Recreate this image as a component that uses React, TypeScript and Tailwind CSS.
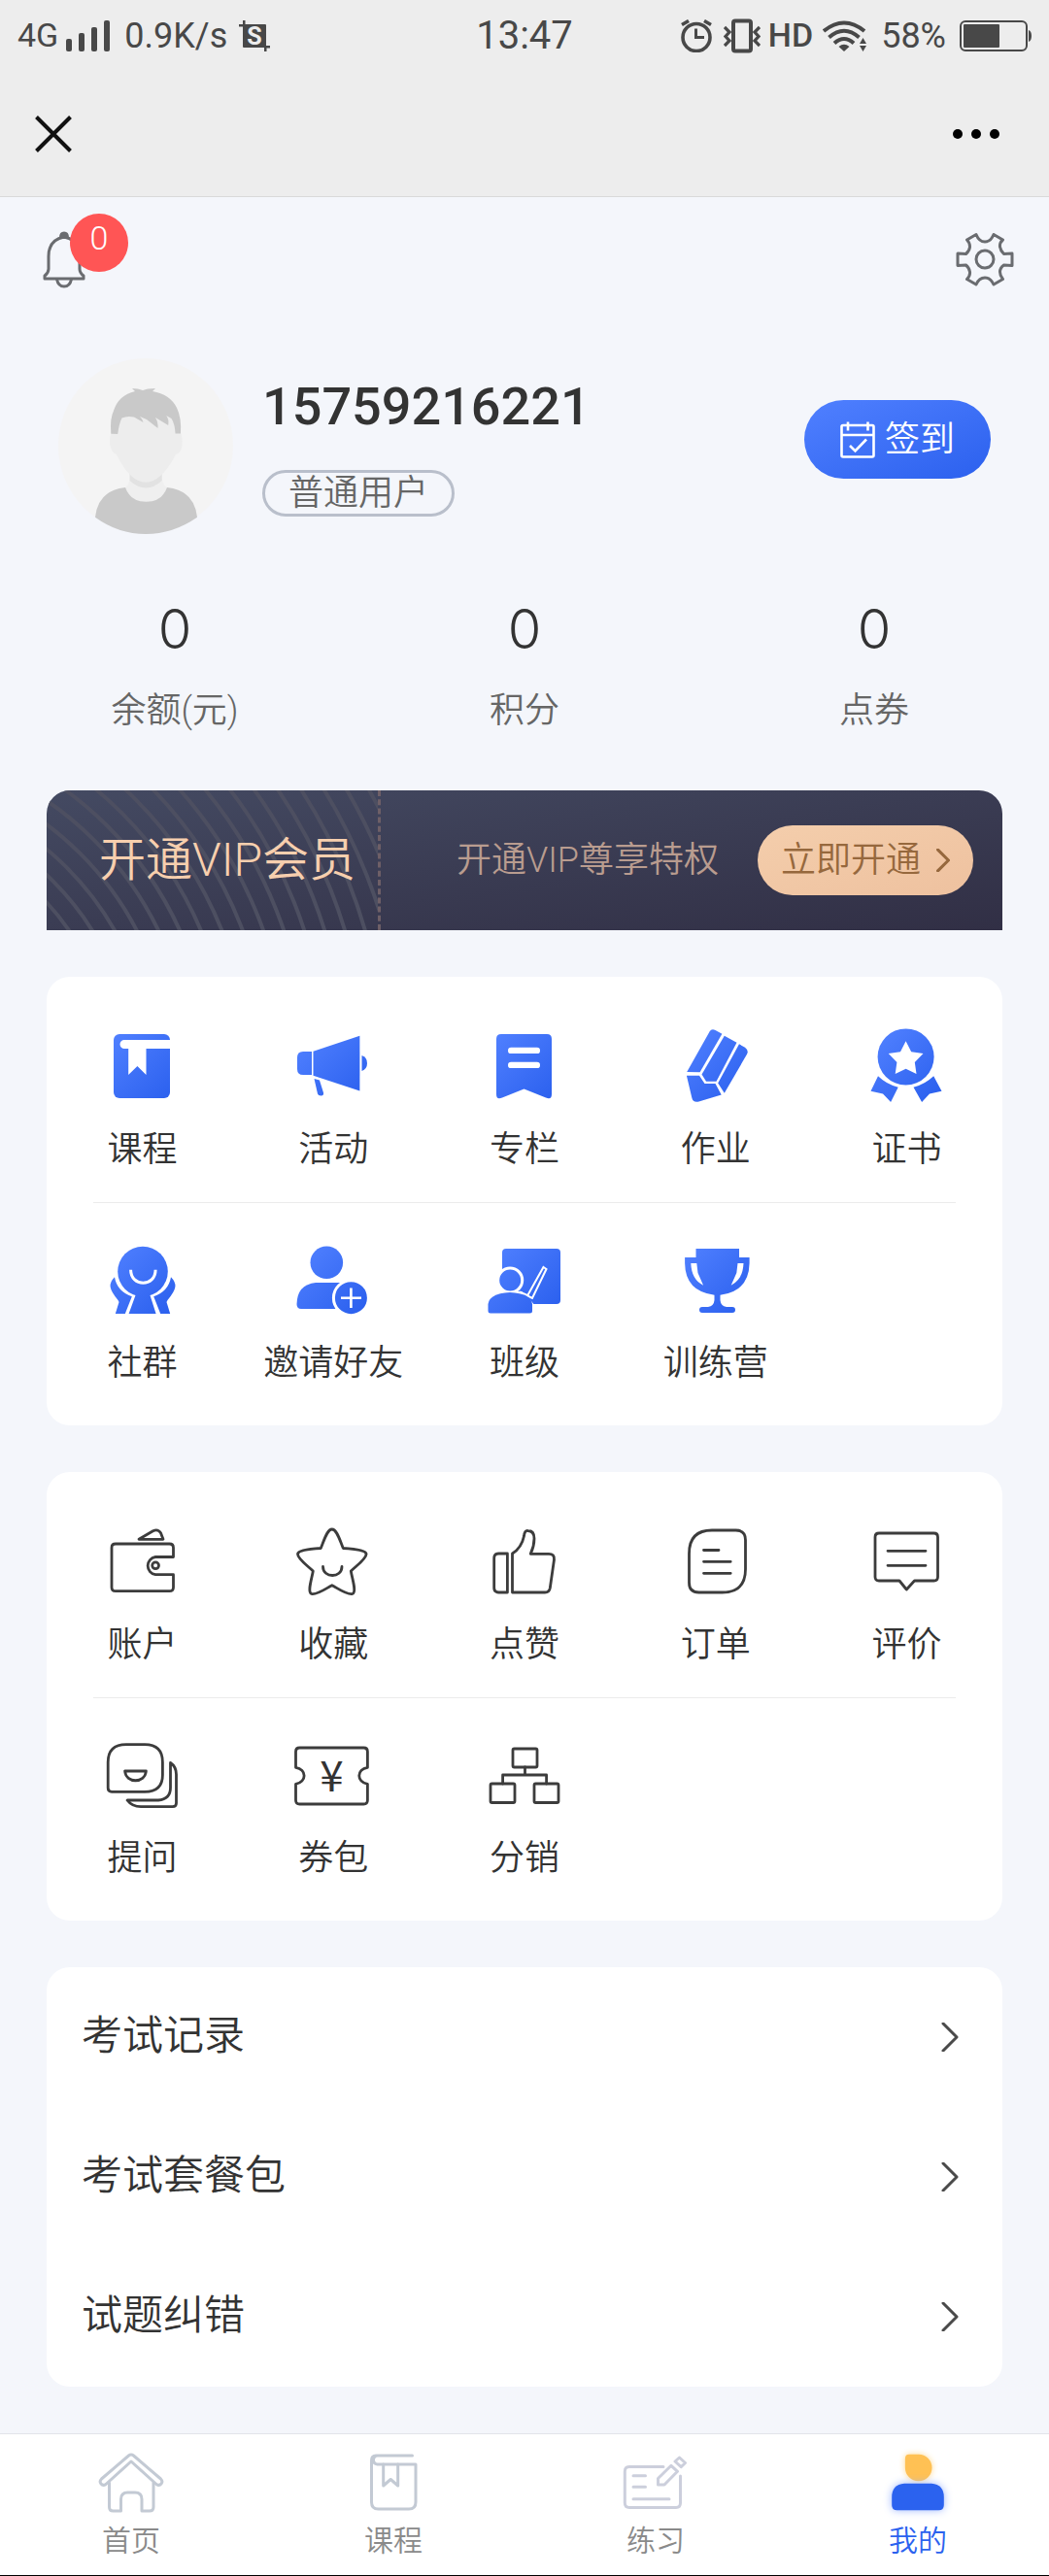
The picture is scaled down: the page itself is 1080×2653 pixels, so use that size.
import React from 'react';

interface Entry {
  label: string;
  icon: React.ReactNode;
}

const Glyph: React.FC<{ children: React.ReactNode }> = ({ children }) => (
  <svg viewBox="0 0 72 72" className="size-[72px] overflow-visible" aria-hidden="true">
    {children}
  </svg>
);

const Solid: React.FC<{ children: React.ReactNode }> = ({ children }) => (
  <Glyph>
    <g fill="url(#blueFill)">{children}</g>
  </Glyph>
);

const Outline: React.FC<{ children: React.ReactNode }> = ({ children }) => (
  <Glyph>
    <g fill="none" stroke="#3c3c3c" strokeWidth="2.8" strokeLinecap="round" strokeLinejoin="round">
      {children}
    </g>
  </Glyph>
);

const TabOutline: React.FC<{ color: string; children: React.ReactNode }> = ({ color, children }) => (
  <Glyph>
    <g fill="none" stroke={color} strokeWidth="3" strokeLinecap="round" strokeLinejoin="round">
      {children}
    </g>
  </Glyph>
);

const studyEntries: Entry[] = [
  {
    label: '课程',
    icon: (
      <Solid>
        <rect x="7" y="3" width="58" height="66" rx="6" />
        <path d="M66 9H18a4.500 4.500 0 0 0 0 9h4.200v27l9.200-9 9.100 9V18H66z" fill="#fff" />
      </Solid>
    ),
  },
  {
    label: '活动',
    icon: (
      <Solid>
        <path d="M14 21H5q-6 0-6 6v12q0 6 6 6h9z" />
        <path d="M15.500 20.700 63.400 4.700V61.500L15.500 45.700z" />
        <path d="M65.500 25q5.500 2 5.500 8t-5.500 8z" />
        <path d="M16.500 49l5.500 1.500 4 13q.5 3-2.500 3t-3.500-2z" />
      </Solid>
    ),
  },
  {
    label: '专栏',
    icon: (
      <Solid>
        <path d="M12 3h47q5 0 5 5v57q0 6-6 3.500L35.500 59.500 13 68.500q-6 2.500-6-3.500V8q0-5 5-5z" />
        <rect x="19" y="16.700" width="33" height="6.400" rx="3.200" fill="#fff" />
        <rect x="19" y="31.700" width="33" height="6.400" rx="3.200" fill="#fff" />
      </Solid>
    ),
  },
  {
    label: '作业',
    icon: (
      <Solid>
        <path d="M6.200 42 29.500.500q2-3.500 6-1.500l6.900 3.700L19.600 42.300z" />
        <path d="M44.800 4.700 57.500 11.700 36.500 51.700H26L21.500 44.500z" />
        <path d="M60 13.300l6 3.500q4 3 2 7L44.800 63.700 38.200 53.500z" />
        <path d="M5.900 45.700H19l5.500 8.300h11l6.200 11.500L18.500 72.500q-6 1.500-7.200-4z" />
      </Solid>
    ),
  },
  {
    label: '证书',
    icon: (
      <Solid>
        <circle cx="34.600" cy="26.400" r="29" />
        <path
          d="M34.600 10.300l5.600 10.900 12.300 1.900-8.700 8.800 1.700 12-10.900-5.100-10.900 5.100 1.700-12-8.700-8.800 12.300-1.900z"
          fill="#fff"
        />
        <path d="M6 46.300Q15 55 26.700 57.700L19.100 73 11 64.500l-12.500-2.800z" />
        <path d="M63.200 46.300Q54 55 42.500 57.700L51.100 73 59 64.500l12.500-2.800z" />
      </Solid>
    ),
  },
  {
    label: '社群',
    icon: (
      <Solid>
        <circle cx="37" cy="27.500" r="25.800" />
        <path d="M29.500 49v3L22.600 71h28L44.500 52v-3z" />
        <path d="M24.600 25.700c0 18 25.500 18 25.500 0" fill="none" stroke="#fff" strokeWidth="3" />
        <path d="M8 33.300q-5 5-4.400 10T11.500 57l1 2L8.800 71h10l7-17.700Q10.500 48 8 33.300z" />
        <path d="M66 33.300q5 5 4.400 10T62.500 57l-1 2L65.200 71h-10l-7-17.700Q63.500 48 66 33.300z" />
      </Solid>
    ),
  },
  {
    label: '邀请好友',
    icon: (
      <Solid>
        <circle cx="29.300" cy="18.300" r="16.800" />
        <path d="M18 39h26v27H3q-4.500 0-4.500-5Q-1 41 18 39z" />
        <circle cx="54.400" cy="54.700" r="18" stroke="#fff" strokeWidth="3" />
        <path d="M44 54.700h21M54.400 44.500v20.500" stroke="#fff" strokeWidth="2.600" />
      </Solid>
    ),
  },
  {
    label: '班级',
    icon: (
      <Solid>
        <rect x="13" y="4" width="60" height="57" rx="4" />
        <circle cx="21.200" cy="36.500" r="12.500" stroke="#fff" strokeWidth="3" />
        <path d="M12 48h21l6 5 8 10v8H8z" fill="#fff" />
        <path d="M55.500 23l3 2L44 55l-5-2.500z" stroke="#fff" strokeWidth="2" />
        <path d="M31 48.500l9 4" stroke="#fff" strokeWidth="2" />
        <path d="M21 49q22 1 23 12v7q0 2.500-2.500 2.500H1q-2.500 0-2.500-2.500v-7Q0 50 21 49z" />
      </Solid>
    ),
  },
  {
    label: '训练营',
    icon: (
      <Solid>
        <path d="M15.500 4h44.500v9h10.600v6Q70 48 40.500 51.700V57q.5 6 6.500 7h6a3 3 0 0 1 0 6H22a3 3 0 0 1 0-6h6q6-1 6.500-7v-5.300Q4.500 48 4.100 19v-6h11.400z" />
        <path d="M10.300 19h6l1.200 10 5.600 12.700Q11 36 10.300 19zM64.500 19h-6l-1.200 10-5.600 12.700Q63.800 36 64.500 19z" fill="#fff" />
      </Solid>
    ),
  },
];

const accountEntries: Entry[] = [
  {
    label: '账户',
    icon: (
      <Outline>
        <path d="M68.500 31.500V22q0-4-4-4H9q-4 0-4 4v40.700q0 4 4 4h55.500q4 0 4-4V49.700H50a9.200 9.200 0 0 1 0-18.200z" />
        <circle cx="50.100" cy="40.300" r="3.400" />
        <path d="M33 13.300 47.500 4.800q5-2.500 8 2l2.500 6.500z" />
      </Outline>
    ),
  },
  {
    label: '收藏',
    icon: (
      <Outline>
        <path d="M34.800 3c-5 0-8 11-11.500 19.500C14 23 0 24-.5 28.500c0 5 10 12 15.800 17.500-1 7-6.300 22-1.500 23.500 5 1.500 14-5 21-8.800 7 3.800 16 10.300 21 8.800 4.800-1.500-.5-16.500-1.500-23.500 5.800-5.500 15.800-12.500 15.800-17.500C69.600 24 55.600 23 46.300 22.500 42.800 14 39.800 3 34.800 3z" />
        <path d="M25.500 41.500c0 12 19.500 12 19.500 0" />
      </Outline>
    ),
  },
  {
    label: '点赞',
    icon: (
      <Outline>
        <path d="M18.400 28H9.500q-4.800 0-4.800 5v30q0 5 4.800 5h8.900z" />
        <path d="M23.500 68V28Q33 22 35.500 10q.5-6 4-5.500 6.500 0 6.500 8 0 8-3.800 15.800H61q6 0 5.500 6l-4.200 29.200q-.8 4.500-5.300 4.500z" />
      </Outline>
    ),
  },
  {
    label: '订单',
    icon: (
      <Outline>
        <path d="M32 4h24.500q10 0 10 10v30q0 24-24 24h-24q-10 0-10-10V28Q8.500 4 32 4z" />
        <path d="M23.500 24.500H39M23.500 36.300h27.700M23.500 48.300h27.700" />
      </Outline>
    ),
  },
  {
    label: '评价',
    icon: (
      <Outline>
        <path d="M7 7h56.500q4 0 4 4v41q0 4-4 4H43.500l-8.200 9-7.300-9H7q-4 0-4-4V11q0-4 4-4z" />
        <path d="M16 25.300h39M16 40.300h39" />
      </Outline>
    ),
  },
  {
    label: '提问',
    icon: (
      <Outline>
        <path d="M20 4.700h19q18.400 0 18.400 18.300v13q0 17.300-18.400 17.300H5q-3.800 0-3.800-3.800V23Q1.200 4.700 20 4.700z" />
        <path d="M18.600 32h21.800c-1 13-20.800 13-21.800 0z" />
        <path d="M65.500 23.500q6 4 6 12V65q0 3.700-3.700 3.700H35q-9 0-14-6.700h32q12.500-1 12.500-13z" />
      </Outline>
    ),
  },
  {
    label: '券包',
    icon: (
      <Outline>
        <path d="M1.500 8h65.900q4 0 4 4v16.300c-11.500 2-11.500 15 0 17V62q0 4-4 4H1.500q-4 0-4-4V45.300c11.500-2 11.500-15 0-17V12q0-4 4-4z" />
        <text
          x="34.500"
          y="53"
          textAnchor="middle"
          fill="#333"
          stroke="none"
          className="font-['Noto_Sans_CJK_SC',sans-serif] text-[44px] font-normal"
        >
          ¥
        </text>
      </Outline>
    ),
  },
  {
    label: '分销',
    icon: (
      <Outline>
        <rect x="24" y="9" width="25" height="19" rx="1.500" />
        <rect x="1" y="45" width="25" height="19.500" rx="1.500" />
        <rect x="46" y="45" width="25" height="19.500" rx="1.500" />
        <path d="M36.500 28v8M13.600 45v-9h45v9" />
      </Outline>
    ),
  },
];

const stats = [
  { label: '余额(元)', value: 0 },
  { label: '积分', value: 0 },
  { label: '点券', value: 0 },
];

const records = ['考试记录', '考试套餐包', '试题纠错'];

const tabs = [
  {
    label: '首页',
    icon: (
      <TabOutline color="#c3cad4">
        <path d="M33.500 8q2.500-2 5 0l28 24q2.500 2.500.5 5t-5 .5L36 14 10 37.500q-3 2-5-.5t.5-5z" />
        <path d="M13.500 36v25q0 4 4 4h8V53q0-7 7-7h7.500q7 0 7 7v12h8q4 0 4-4V36" />
      </TabOutline>
    ),
  },
  {
    label: '课程',
    icon: (
      <TabOutline color="#c3cad4">
        <path d="M55.500 8H18q-4.500 0-4.500 5v43q0 7 7 7h31.500q7 0 7-7V17H19.500q-4-.5-4-4.500T19.500 8" />
        <path d="M25.700 17v22l7.500-6.500 7.500 6.500V17" />
      </TabOutline>
    ),
  },
  {
    label: '练习',
    icon: (
      <TabOutline color="#cccfdc">
        <path d="M44 19.500H9q-4.700 0-4.700 4.700v32.500q0 4.700 4.700 4.700h48q4.500 0 4.500-4.700V29" />
        <path d="M13 28.700h12.500M13 40.300h12.500M13 52.700h37" />
        <path d="M38.500 38v-6.500L52 18.300l6.500 6L45 38zM56 14l4.500-4 6 5.500-4.300 4.200z" />
      </TabOutline>
    ),
  },
  {
    label: '我的',
    active: true,
    icon: (
      <Glyph>
        <path
          d="M27 6.700h9.700a13.800 13.800 0 1 1-13.800 13.800V11q0-4.300 4.100-4.300z"
          fill="#ffc154"
          className="drop-shadow-[0_0_3px_#ffd98f]"
        />
        <path
          d="M22 36.700h28q12.800 1 12.800 14V59q0 5.300-5.300 5.300h-43Q9.200 64.300 9.200 59v-8.300q0-13 12.800-14z"
          fill="#2b62ef"
          className="drop-shadow-[0_0_4px_#9db6ff]"
        />
      </Glyph>
    ),
  },
];

const StatusBar: React.FC = () => (
  <div className="grid h-[74px] grid-cols-[1fr_auto_1fr] items-center px-[18px] font-[Roboto,sans-serif] text-4xl font-normal text-[#484848]">
    <div className="flex items-center">
      <span className="text-[34px]">4G</span>
      <svg viewBox="0 0 46 32" className="ml-2 h-8 w-[46px]" fill="currentColor" aria-hidden="true">
        <rect x="0" y="19" width="6" height="13" rx="2" />
        <rect x="13" y="13" width="6" height="19" rx="2" />
        <rect x="26" y="7" width="6" height="25" rx="2" />
        <rect x="39" y="0" width="6" height="32" rx="2" />
      </svg>
      <span className="ml-3.5">0.9K/s</span>
      <svg viewBox="0 0 32 32" className="ml-3 size-8" fill="currentColor" aria-hidden="true">
        <rect x="4" y="4" width="24" height="24" rx="1" />
        <path d="M0 4h6v2.500H0zM4 0h2.500v6H4zM26 26h6v2.500h-6zM26 26h2.500v6H26z" />
        <text x="16" y="25" textAnchor="middle" fill="#ededed" className="text-[25px] font-bold">
          S
        </text>
      </svg>
    </div>
    <span className="text-[40px]">13:47</span>
    <div className="flex items-center justify-end">
      <svg viewBox="0 0 32 34" className="h-[34px] w-8" fill="none" stroke="currentColor" strokeWidth="4" aria-hidden="true">
        <circle cx="16" cy="18.500" r="14" strokeWidth="3.600" />
        <path d="M15.500 9.500v9h8.500" strokeWidth="3" />
        <path d="M1 5.500l7-4M31 5.500l-7-4" strokeWidth="3.600" />
      </svg>
      <svg viewBox="0 0 38 36" className="ml-3 h-9 w-[38px]" fill="none" stroke="currentColor" aria-hidden="true">
        <rect x="10" y="2.500" width="18" height="31" rx="2" strokeWidth="4" />
        <path d="M1 9l5 5-4 4.500 4 4.500-5 5M37 9l-5 5 4 4.500-4 4.500 5 5" strokeWidth="3.200" />
      </svg>
      <span className="ml-2 text-[34px] font-medium">HD</span>
      <svg viewBox="0 0 46 32" className="ml-2.5 h-8 w-[46px]" fill="none" stroke="currentColor" strokeWidth="4" aria-hidden="true">
        <path d="M1 11Q22 -6 43 11M6.500 17.500Q22 4 37.500 17.500M12 23.500Q22 14.500 32 23.500" />
        <path d="M16.500 27Q22 22.500 27.500 27L22 32z" fill="currentColor" stroke="none" />
        <path d="M38 24l3.500-6 3.500 6zM38 26h7l-3.500 6z" fill="currentColor" stroke="none" />
      </svg>
      <span className="ml-3.5">58%</span>
      <svg viewBox="0 0 74 32" className="ml-3.5 h-8 w-[74px]" fill="none" stroke="currentColor" aria-hidden="true">
        <rect x="1" y="1" width="68" height="30" rx="5" strokeWidth="2" />
        <rect x="4" y="4" width="37" height="24" rx="1" fill="currentColor" stroke="none" />
        <path d="M71 10q3 1 3 6t-3 6z" fill="currentColor" stroke="none" />
      </svg>
    </div>
  </div>
);

const Chevron: React.FC<{ className: string }> = ({ className }) => (
  <svg viewBox="0 0 18 30" className={className} fill="none" stroke="currentColor" strokeLinecap="round" strokeLinejoin="round" aria-hidden="true">
    <path d="M2 1l14 14L2 29" />
  </svg>
);

const EntryRow: React.FC<{ items: Entry[] }> = ({ items }) => (
  <div className="grid grid-cols-5 pt-[43px] pb-[30px]">
    {items.map(item => (
      <a key={item.label} href="#" className="flex flex-col items-center gap-[26px]">
        {item.icon}
        <span className="text-4xl leading-12 whitespace-nowrap">{item.label}</span>
      </a>
    ))}
  </div>
);

const EntryCard: React.FC<{ items: Entry[] }> = ({ items }) => (
  <section className="rounded-3xl bg-white pt-[13px] pb-2.5">
    <EntryRow items={items.slice(0, 5)} />
    <hr className="mx-12 border-[#ebebeb]" />
    <EntryRow items={items.slice(5)} />
  </section>
);

const Avatar: React.FC = () => (
  <svg viewBox="0 0 180 182" className="h-[182px] w-[180px] shrink-0" role="img" aria-label="头像">
    <circle cx="90" cy="90" r="90" fill="#f4f4f4" />
    <path d="M38 163.700Q41 136 69 133h43q28 3 31 30.700Q118 181 90 181T38 163.700z" fill="#c9c9c9" />
    <path d="M73.600 112v12q-1 7-4.600 9 5 14.700 21.500 14.700T112 133q-4-2-5.300-9v-12z" fill="#efefef" />
    <path d="M73.600 116v10q8 7.500 16.500 7.500t16.600-7.500v-10z" fill="#e2e2e2" />
    <path d="M55 76q-3 7-1.500 14 2 8 6.500 9Q74 127.700 90 127.700T121 99q5-1 6.500-9 1-7-1.500-14L116 50H64z" fill="#ededed" />
    <path
      d="M54.300 77.700Q53 62 57 54q5-16 22-20l-3-3 6 .5 5 1.500 5-1.500 8-.5-3 3q18 3 25 17 5 10 4 26.500h-5.500q-.5-10-4-15.500l-5.300-3q3 4 2 10L100 61q3 5 2.500 11L91 63l-7-3q3 3 3.500 6L78 60.500q-7-1.500-12.500 1-3 6-4.300 16.500z"
      fill="#c9c9c9"
    />
  </svg>
);

const VipBanner: React.FC = () => (
  <section className="mt-[58px] flex h-36 overflow-hidden rounded-t-3xl bg-linear-to-br from-[#444a62] to-[#312f45]">
    <div className="relative flex w-[344px] items-center border-r-3 border-dashed border-[#6e5f67] pl-[54px] text-5xl text-[#f7cfae]">
      <svg viewBox="0 0 342 144" className="absolute inset-0 size-full" fill="none" stroke="#4d4f61" strokeWidth="4" aria-hidden="true">
        {Array.from({ length: 21 }, (_, i) => (
          <circle key={i} cx="-195" cy="295" r={205 + i * 20} />
        ))}
      </svg>
      <h2 className="relative whitespace-nowrap">开通VIP会员</h2>
    </div>
    <div className="flex grow items-center justify-end gap-10 pr-[30px]">
      <p className="text-4xl whitespace-nowrap text-[#b99c8f]">开通VIP尊享特权</p>
      <button type="button" className="flex h-18 w-[222px] items-center justify-center gap-4 rounded-full bg-linear-to-br from-[#f4ceac] to-[#eec19f] text-4xl text-[#96683d]">
        立即开通
        <Chevron className="h-6 w-3.5 stroke-4" />
      </button>
    </div>
  </section>
);

export default function App() {
  return (
    <div className="min-h-screen bg-[#f4f6fb] font-[Roboto,'Noto_Sans_CJK_SC',sans-serif] font-[350] text-[#333]">
      <svg className="absolute size-0" aria-hidden="true">
        <defs>
          <linearGradient id="blueFill" gradientUnits="userSpaceOnUse" x1="4" y1="4" x2="68" y2="68">
            <stop offset="0" stopColor="#5080ff" />
            <stop offset="1" stopColor="#2b60ee" />
          </linearGradient>
        </defs>
      </svg>

      <header className="border-b border-[#d9d9d9] bg-[#ededed]">
        <StatusBar />
        <div className="flex h-32 items-center justify-between px-9 text-black">
          <button type="button" aria-label="关闭">
            <svg viewBox="0 0 38 38" className="size-[38px]" stroke="#111" strokeWidth="4" aria-hidden="true">
              <path d="M1.500 1.500l35 35M36.500 1.500l-35 35" />
            </svg>
          </button>
          <button type="button" aria-label="更多" className="mr-[15px] flex gap-[9px]">
            <span className="size-2.5 rounded-full bg-black" />
            <span className="size-2.5 rounded-full bg-black" />
            <span className="size-2.5 rounded-full bg-black" />
          </button>
        </div>
      </header>

      <main className="pb-12">
        <div className="flex justify-between px-9 pt-[34px]">
          <button type="button" aria-label="消息" className="relative size-15">
            <svg viewBox="0 0 60 60" className="size-15" fill="none" stroke="#6a6c70" strokeWidth="3" strokeLinejoin="round" aria-hidden="true">
              <path d="M30 7Q14 10 14 27v13q0 4-4 7v3h40v-3q-4-3-4-7V27Q46 10 30 7z" />
              <path d="M26.500 7.500q0-4.500 3.500-4.500t3.500 4.500z" fill="#6a6c70" />
              <path d="M22.500 50.500q1.500 7.500 7.500 7.500t7.500-7.500" />
            </svg>
            <span className="absolute -top-[17px] left-9 size-15 rounded-full bg-[#ff5555] text-center text-[34px] leading-[50px] text-white">
              0
            </span>
          </button>
          <button type="button" aria-label="设置">
            <svg viewBox="0 0 60 60" className="size-15" fill="none" stroke="#6a6c70" strokeWidth="3" strokeLinejoin="round" aria-hidden="true">
              <circle cx="30" cy="30" r="9" />
              <path d="M21 4.500Q24 12 30 12T39 4.500L48.500 10Q45 13 45.500 17T49.500 24.500L58 24V36.500L49.500 36Q45.500 39 45.500 43T48.500 50.500L39 56Q36 49 30 49T21 56L11.500 50.500Q15 47 14.500 43T10.500 36L2 36.500V24L10.500 24.500Q14.500 21 14.500 17T11.500 10z" />
            </svg>
          </button>
        </div>

        <section className="mt-18 flex items-start px-15">
          <Avatar />
          <div className="ml-[30px] flex grow flex-col items-start pt-3.5">
            <h1 className="text-[54px] leading-18 font-medium">15759216221</h1>
            <span className="mt-[29px] flex h-12 items-center rounded-full border-3 border-[#b9bfcb] px-6 text-4xl text-[#666]">
              普通用户
            </span>
          </div>
          <button
            type="button"
            className="mt-[43px] flex h-[81px] w-48 items-center justify-center gap-2.5 rounded-full bg-linear-to-br from-[#5080ff] to-[#2b60ee] text-4xl text-white"
          >
            <svg viewBox="0 0 36 38" className="h-[38px] w-9" fill="none" stroke="currentColor" strokeWidth="2.600" aria-hidden="true">
              <rect x="1.500" y="4" width="33" height="32.500" rx="1.500" />
              <path d="M1.500 14h33M8 .500v9M28.500 .500v9M10 25l5.500 5.500 11.500-12" />
            </svg>
            签到
          </button>
        </section>

        <dl className="mt-[61px] grid grid-cols-3 text-center">
          {stats.map(stat => (
            <div key={stat.label} className="flex flex-col-reverse gap-6">
              <dt className="text-4xl leading-12 text-[#666]">{stat.label}</dt>
              <dd className="font-[Inter,sans-serif] text-[56px] leading-18">{stat.value}</dd>
            </div>
          ))}
        </dl>

        <div className="flex flex-col gap-12 px-12">
          <VipBanner />
          <EntryCard items={studyEntries} />
          <EntryCard items={accountEntries} />
          <nav className="rounded-3xl bg-white">
            {records.map(name => (
              <a key={name} href="#" className="flex h-36 items-center justify-between pr-[45px] pl-9 text-[42px]">
                <span className="pb-1">{name}</span>
                <Chevron className="h-[30px] w-[18px] stroke-3 text-[#4a4a4a]" />
              </a>
            ))}
          </nav>
        </div>
      </main>

      <nav className="grid grid-cols-4 border-t border-b border-t-[#e2e4ea] border-b-black bg-white pt-3.5 pb-[15px]">
        {tabs.map(tab => (
          <a
            key={tab.label}
            href="#"
            className={`flex flex-col items-center gap-1 text-3xl leading-10 ${tab.active ? 'text-[#2b62ef]' : 'text-[#8a8a8a]'}`}
          >
            {tab.icon}
            {tab.label}
          </a>
        ))}
      </nav>
    </div>
  );
}
